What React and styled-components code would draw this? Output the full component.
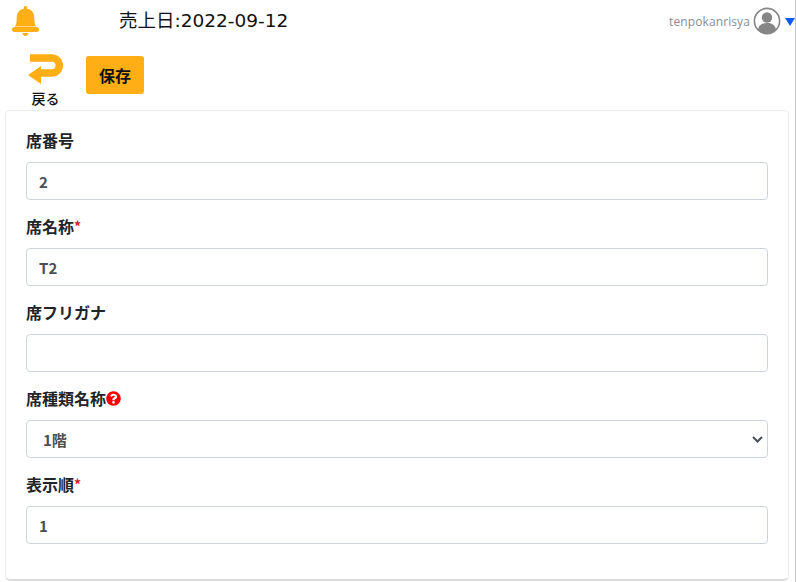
import React from 'react'
import styled, { createGlobalStyle } from 'styled-components'

const GlobalStyle = createGlobalStyle`
  * { box-sizing: border-box; }
  html, body { margin: 0; padding: 0; background: #fff; overflow: hidden; }
  body { font-family: "Noto Sans CJK JP", "Noto Sans", sans-serif; }
`

const Page = styled.div`
  width: 796px;
  height: 582px;
  border-right: 1px solid #c4c4c4;
  display: flex;
  flex-direction: column;
`

const Header = styled.header`
  height: 42px;
  display: flex;
  align-items: center;
  padding-left: 12px;
`

const BusinessDate = styled.div`
  margin-left: 80px;
  font-size: 18.5px;
  line-height: 42px;
  color: #111;
  font-family: "DejaVu Sans", "Noto Sans CJK JP", sans-serif;
`

const UserArea = styled.div`
  margin-left: auto;
  display: flex;
  align-items: center;
  color: #868e96;
  font-size: 12px;
  letter-spacing: 0.1px;
  font-family: "Open Sans", sans-serif;
`

const UserName = styled.span`
  margin-right: 3px;
`

const CaretBox = styled.span`
  display: flex;
  margin: 2px 0 0 4px;
`

const Toolbar = styled.div`
  height: 68px;
  display: flex;
  align-items: flex-start;
  padding: 12px 0 0 27px;
`

const BackLink = styled.div`
  width: 37px;
  display: flex;
  flex-direction: column;
  align-items: center;
  gap: 6px;
  font-size: 14px;
  line-height: 16px;
  font-weight: 500;
  color: #111;
`

const SaveButton = styled.button`
  margin: 2px 0 0 22px;
  width: 58px;
  height: 38px;
  border: 0;
  border-radius: 3px;
  background: #ffae15;
  color: #111;
  font: 700 16px "Noto Sans CJK JP", sans-serif;
`

const Card = styled.main`
  margin-left: 5px;
  width: 784px;
  height: 471px;
  padding: 18px 20px 0 20px;
  background: #fff;
  border: 1px solid #ececec;
  border-bottom: 2px solid #dcdcdc;
  border-radius: 5px;
`

const Field = styled.div`
  height: 86px;
`

const Label = styled.label`
  display: flex;
  align-items: center;
  height: 22px;
  margin-bottom: 11px;
  font-size: 16px;
  font-weight: 700;
  color: #212529;
`

const Required = styled.span`
  color: #d81b1b;
  font-size: 14px;
  font-weight: 700;
`

const Input = styled.input`
  display: block;
  width: 742px;
  height: 38px;
  padding: 0 12px;
  border: 1px solid #ced4da;
  border-radius: 4px;
  background: #fff;
  color: #495057;
  font: 700 15px "Noto Sans CJK JP", sans-serif;
  outline: none;
`

const SelectBox = styled.div`
  width: 742px;
  height: 38px;
  padding: 0 4px 0 16px;
  border: 1px solid #ced4da;
  border-radius: 4px;
  display: flex;
  align-items: center;
  justify-content: space-between;
  color: #495057;
  font-size: 15px;
  font-weight: 700;
`

const Bell = () => (
  <svg width="27" height="30" viewBox="0 0 27 30" fill="#ffae15">
    <circle cx="13.500" cy="1.800" r="1.800" />
    <path d="M13.500 2.500c5.300 0 8.800 3.800 8.800 9.500 0 4.200.5 6.700 1.700 8.500H3c1.200-1.800 1.700-4.300 1.700-8.500 0-5.700 3.500-9.500 8.800-9.500z" />
    <rect x="0" y="21" width="27" height="5" rx="2.500" />
    <path d="M10.500 27h6c-.4 1.800-1.600 3-3 3s-2.600-1.200-3-3z" />
  </svg>
)

const BackArrow = () => (
  <svg width="37" height="30" viewBox="0 0 37 30" fill="none">
    <path d="M3 4h21.750a7.500 7.500 0 0 1 0 15H12" stroke="#ffae15" strokeWidth="7.500" />
    <path d="M1 21 14 12v18z" fill="#ffae15" />
  </svg>
)

const Avatar = () => (
  <svg width="28" height="28" viewBox="0 0 28 28">
    <circle cx="14" cy="14" r="12.600" fill="#fff" stroke="#868686" strokeWidth="1.600" />
    <circle cx="14" cy="10.500" r="5.200" fill="#868686" />
    <path d="M5 22.500c1-5 4.500-6.500 9-6.500s8 1.500 9 6.500A12 12 0 0 1 14 26.600 12 12 0 0 1 5 22.500z" fill="#868686" />
  </svg>
)

const Caret = () => (
  <svg width="10" height="8" viewBox="0 0 10 8">
    <path d="M0 0h10L5 8z" fill="#0d5cff" />
  </svg>
)

const HelpIcon = () => (
  <svg width="15" height="15" viewBox="0 0 512 512">
    <path fill="#ff0000" d="M504 256c0 137-111 248-248 248S8 393 8 256 119 8 256 8s248 111 248 248zM262.700 90c-54.500 0-89.300 23-116.500 63.800-3.500 5.300-2.400 12.400 2.700 16.300l34.700 26.300c5.200 3.900 12.600 3 16.700-2.100 17.900-22.700 30.100-35.800 57.300-35.800 20.400 0 45.700 13.100 45.700 33 0 15-12.400 22.700-32.600 34-23.600 13.200-54.800 29.700-54.800 70.900V302c0 6.600 5.400 12 12 12h56c6.600 0 12-5.400 12-12v-1.300c0-28.600 83.500-29.800 83.500-107.200C380 135.200 319.600 90 262.700 90zM256 339c-25.400 0-46 20.600-46 46s20.600 46 46 46 46-20.600 46-46-20.600-46-46-46z" />
  </svg>
)

const SelectChevron = () => (
  <svg width="11" height="7" viewBox="0 0 11 7" fill="none">
    <path d="M1 1l4.500 4.500L10 1" stroke="#495057" strokeWidth="2" />
  </svg>
)

export default function App() {
  return (
    <>
      <GlobalStyle />
      <Page>
        <Header>
          <Bell />
          <BusinessDate>売上日:2022-09-12</BusinessDate>
          <UserArea>
            <UserName>tenpokanrisya</UserName>
            <Avatar />
            <CaretBox><Caret /></CaretBox>
          </UserArea>
        </Header>
        <Toolbar>
          <BackLink>
            <BackArrow />
            戻る
          </BackLink>
          <SaveButton>保存</SaveButton>
        </Toolbar>
        <Card>
          <Field>
            <Label>席番号</Label>
            <Input defaultValue="2" />
          </Field>
          <Field>
            <Label>席名称<Required>*</Required></Label>
            <Input defaultValue="T2" />
          </Field>
          <Field>
            <Label>席フリガナ</Label>
            <Input />
          </Field>
          <Field>
            <Label>席種類名称<HelpIcon /></Label>
            <SelectBox>
              1階
              <SelectChevron />
            </SelectBox>
          </Field>
          <Field>
            <Label>表示順<Required>*</Required></Label>
            <Input defaultValue="1" />
          </Field>
        </Card>
      </Page>
    </>
  )
}
